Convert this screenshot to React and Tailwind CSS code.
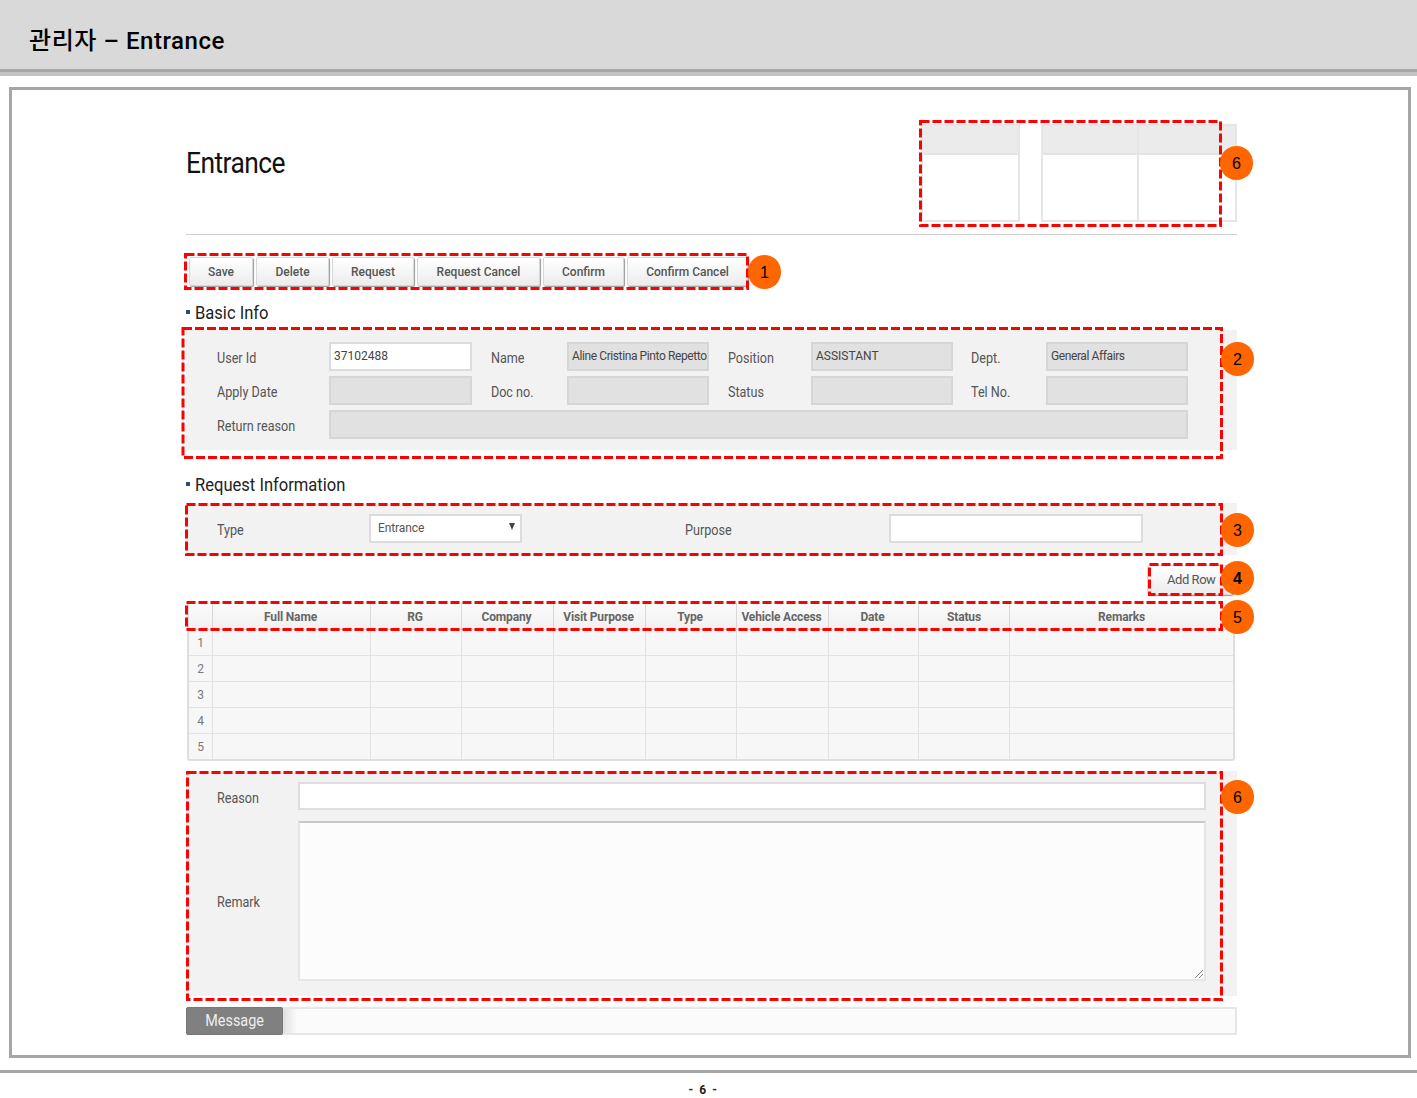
const FONT = "font-['Roboto','Noto_Sans_CJK_KR',sans-serif]";

const actions = [
  { label: "Save", width: "w-[64px]" },
  { label: "Delete", width: "w-[73px]" },
  { label: "Request", width: "w-[82px]" },
  { label: "Request Cancel", width: "w-[123px]" },
  { label: "Confirm", width: "w-[81px]" },
  { label: "Confirm Cancel", width: "w-[121px]" },
];

const columns = [
  { label: "", width: "w-[24px]" },
  { label: "Full Name", width: "w-[158px] pr-[2px]" },
  { label: "RG", width: "w-[91px] pr-[2px]" },
  { label: "Company", width: "w-[92px] pr-[2px]" },
  { label: "Visit Purpose", width: "w-[92px] pr-[2px]" },
  { label: "Type", width: "w-[91px] pr-[2px]" },
  { label: "Vehicle Access", width: "w-[92px] pr-[2px]" },
  { label: "Date", width: "w-[90px] pr-[2px]" },
  { label: "Status", width: "w-[91px]" },
  { label: "Remarks", width: "flex-1" },
];

const rows = [1, 2, 3, 4, 5];

const dashedBoxes = [
  { x: 920.5, y: 121.5, w: 300, h: 104 },
  { x: 185.5, y: 254.5, w: 562, h: 34 },
  { x: 183, y: 328.5, w: 1038.5, h: 129 },
  { x: 186.5, y: 504.5, w: 1035, h: 50 },
  { x: 1149.5, y: 564.5, w: 72, h: 30 },
  { x: 186.5, y: 602.5, w: 1035, h: 27 },
  { x: 187.5, y: 772.5, w: 1034, h: 227 },
];

const badges = [
  { n: 6, pos: "left-[1220px] top-[146px]" },
  { n: 1, pos: "left-[748px] top-[255px]" },
  { n: 2, pos: "left-[1221px] top-[342px]" },
  { n: 3, pos: "left-[1221px] top-[513px]" },
  { n: 4, pos: "left-[1221px] top-[561px] font-bold" },
  { n: 5, pos: "left-[1221px] top-[600px]" },
  { n: 6, pos: "left-[1221px] top-[780px]" },
];

const Heading = ({ children, className = "" }) => (
  <h2 className={`flex h-[20px] items-center gap-[5px] text-[18px] leading-none font-normal text-[#222] ${className}`}>
    <span className="h-[4px] w-[4px] bg-[#1f4e8c]" />
    <span className="origin-left scale-x-[0.92] whitespace-nowrap pt-[2px]">{children}</span>
  </h2>
);

const Label = ({ children, className = "" }) => (
  <span className={`origin-left scale-x-90 pt-[4px] text-[14px] leading-[24px] whitespace-nowrap text-[#555] ${className}`}>
    {children}
  </span>
);

const Field = ({ value = "", white, small, span }) => (
  <div
    className={`h-[29px] border-2 px-[3px] pt-[3px] text-[12px] leading-[18px] whitespace-nowrap overflow-hidden text-[#444] ${
      white ? "border-[#dcdcdc] bg-white" : "border-[#d6d6d6] bg-[#e1e1e1]"
    } ${small ? "tracking-[-0.4px]" : ""} ${span ? "col-span-7" : ""}`}
  >
    {value}
  </div>
);

const Approval = ({ className = "" }) => (
  <div className={`flex w-[98px] flex-col border-y-2 border-r-2 border-[#e6e6e6] ${className}`}>
    <div className="h-[29px] border-b-2 border-[#e3e3e3] bg-[#ebebeb]" />
    <div className="flex-1 bg-white" />
  </div>
);

export default function App() {
  return (
    <div className={`relative flex h-[1098px] w-[1417px] flex-col overflow-hidden bg-white ${FONT}`}>
      <header className="h-[76px] border-b-[4px] border-[#c4c4c4]">
        <div className="flex h-[72px] items-center border-b-[3px] border-[#a6a6a6] bg-[#d9d9d9] pt-[13px] pl-[29px] text-[24px] font-medium tracking-[0.55px] text-black">
          관리자 – Entrance
        </div>
      </header>

      <main className="mt-[11px] ml-[9px] h-[972px] w-[1402px] border-[3px] border-[#a6a6a6] pt-[34px] pl-[174px]">
        <div className="w-[1051px]">
          <section className="flex h-[98px] justify-between">
            <h1 className="origin-left scale-x-[0.91] pt-[21px] text-[29px] leading-[36px] font-normal tracking-[-0.6px] text-[#111]">
              Entrance
            </h1>
            <div className="flex">
              <Approval className="mr-[21px] w-[99px] border-l-2" />
              <Approval className="border-l-2" />
              <Approval />
            </div>
          </section>

          <div className="mt-[12px] h-[1px] bg-[#cfcfcf]" />

          <div className="mt-[22px] flex gap-[3px] pl-[3px]">
            {actions.map((a) => (
              <button
                key={a.label}
                className={`h-[29px] rounded-[2px] border border-[#d8d8d8] bg-gradient-to-b from-white to-[#ececec] text-[12px] font-medium text-[#555] shadow-[1px_1px_1px_#999] ${a.width}`}
              >
                {a.label}
              </button>
            ))}
          </div>

          <Heading className="mt-[16px]">Basic Info</Heading>
          <section className="mt-[8px] grid h-[120px] grid-cols-[112px_143px_95px_142px_102px_142px_93px_142px] content-start gap-y-[5px] bg-[#f2f2f2] pt-[12px] pl-[31px]">
            <Label>User Id</Label>
            <Field white value="37102488" />
            <Label className="pl-[21px]">Name</Label>
            <Field small value="Aline Cristina Pinto Repetto" />
            <Label className="pl-[21px]">Position</Label>
            <Field value="ASSISTANT" />
            <Label className="pl-[20px]">Dept.</Label>
            <Field small value="General Affairs" />
            <Label>Apply Date</Label>
            <Field />
            <Label className="pl-[21px]">Doc no.</Label>
            <Field />
            <Label className="pl-[21px]">Status</Label>
            <Field />
            <Label className="pl-[20px]">Tel No.</Label>
            <Field />
            <Label>Return reason</Label>
            <Field span />
          </section>

          <Heading className="mt-[24px]">Request Information</Heading>
          <section className="mt-[9px] flex h-[52px] items-start bg-[#f2f2f2] pt-[11px] pl-[31px]">
            <Label className="w-[152px]">Type</Label>
            <div className="relative h-[29px] w-[153px] border-2 border-[#dcdcdc] bg-white pt-[3px] pl-[7px] text-[12px] leading-[18px] tracking-[-0.1px] text-[#555]">
              Entrance
              <span className="absolute top-[7px] right-[5px] h-0 w-0 border-x-[3.5px] border-t-[7px] border-x-transparent border-t-[#444]" />
            </div>
            <Label className="ml-[163px] w-[204px]">Purpose</Label>
            <div className="h-[29px] w-[254px] border-2 border-[#dcdcdc] bg-white" />
          </section>

          <div className="mt-[10px] flex justify-end pr-[4px]">
            <button className="h-[30px] w-[86px] rounded-[3px] border border-[#d8d8d8] bg-gradient-to-b from-white to-[#ececec] pl-[19px] text-left text-[13px] tracking-[-0.45px] whitespace-nowrap text-[#555] shadow-[1px_1px_1px_#999]">
              Add Row
            </button>
          </div>

          <section className="mt-[8px] ml-[1px] w-[1048px] overflow-hidden rounded-b-[3px] border-r-2 border-b-2 border-l-2 border-[#dedede] bg-[#f7f7f7]">
            <div className="flex h-[27px] border-b border-[#d8d8d8] bg-gradient-to-b from-[#fbfbfb] to-[#f1f1f1]">
              {columns.map((c, i) => (
                <div
                  key={i}
                  className={`flex items-center justify-center border-r border-[#d8d8d8] pt-[1px] text-[12px] leading-none font-bold tracking-[-0.15px] whitespace-nowrap text-[#666] last:border-r-0 ${c.width}`}
                >
                  {c.label}
                </div>
              ))}
            </div>
            {rows.map((n) => (
              <div key={n} className="flex h-[26px] border-b border-[#e2e2e2] last:h-[25px] last:border-b-0">
                {columns.map((c, i) => (
                  <div
                    key={i}
                    className={`flex items-center justify-center border-r border-[#e2e2e2] text-[12px] text-[#777] last:border-r-0 ${c.width}`}
                  >
                    {i === 0 ? n : ""}
                  </div>
                ))}
              </div>
            ))}
          </section>

          <section className="mt-[10px] flex h-[225px] flex-col gap-[11px] bg-[#f2f2f2] pt-[11px] pl-[31px]">
            <div className="flex items-start">
              <Label className="w-[81px]">Reason</Label>
              <div className="h-[28px] w-[908px] border-2 border-[#dedede] bg-white" />
            </div>
            <div className="flex items-center">
              <Label className="-mt-[2px] w-[81px]">Remark</Label>
              <div className="relative h-[160px] w-[908px] border-2 border-t-[#c8c8c8] border-r-[#e6e6e6] border-b-[#e6e6e6] border-l-[#e6e6e6] bg-[#fcfcfc]">
                <svg className="absolute right-0 bottom-0" width="10" height="10" viewBox="0 0 10 10" fill="none" stroke="#888" strokeWidth="1">
                  <path d="M1 9 L9 1 M5 9 L9 5" />
                </svg>
              </div>
            </div>
          </section>

          <div className="mt-[11px] flex h-[28px] rounded-[2px] border-2 border-l-0 border-[#e6e6e6] bg-[#fbfbfb]">
            <div className="-my-[2px] flex w-[97px] items-center justify-center rounded-[2px] border border-[#777] bg-[#808080] text-[16px] text-[#eee]">
              <span className="scale-x-90">Message</span>
            </div>
            <div className="w-[14px] bg-gradient-to-r from-[#e0e0e0] to-[#fbfbfb]" />
          </div>
        </div>
      </main>

      <footer className="mt-[12px] border-t-[3px] border-[#a6a6a6] pt-[9px] pr-[10px] text-center text-[12px] leading-[16px] font-bold tracking-[1.5px] text-[#222]">
        - 6 -
      </footer>

      <svg className="pointer-events-none absolute inset-0" width="1417" height="1098" fill="none" stroke="#ff0000" strokeWidth="3" strokeDasharray="9 3">
        {dashedBoxes.map((b, i) => (
          <rect key={i} x={b.x} y={b.y} width={b.w} height={b.h} />
        ))}
      </svg>

      {badges.map((b, i) => (
        <div
          key={i}
          className={`absolute flex h-[34px] w-[33px] items-center justify-center rounded-full bg-[#ff6600] pt-[1px] text-[16px] text-black font-['Liberation_Sans',sans-serif] ${b.pos}`}
        >
          {b.n}
        </div>
      ))}
    </div>
  );
}
